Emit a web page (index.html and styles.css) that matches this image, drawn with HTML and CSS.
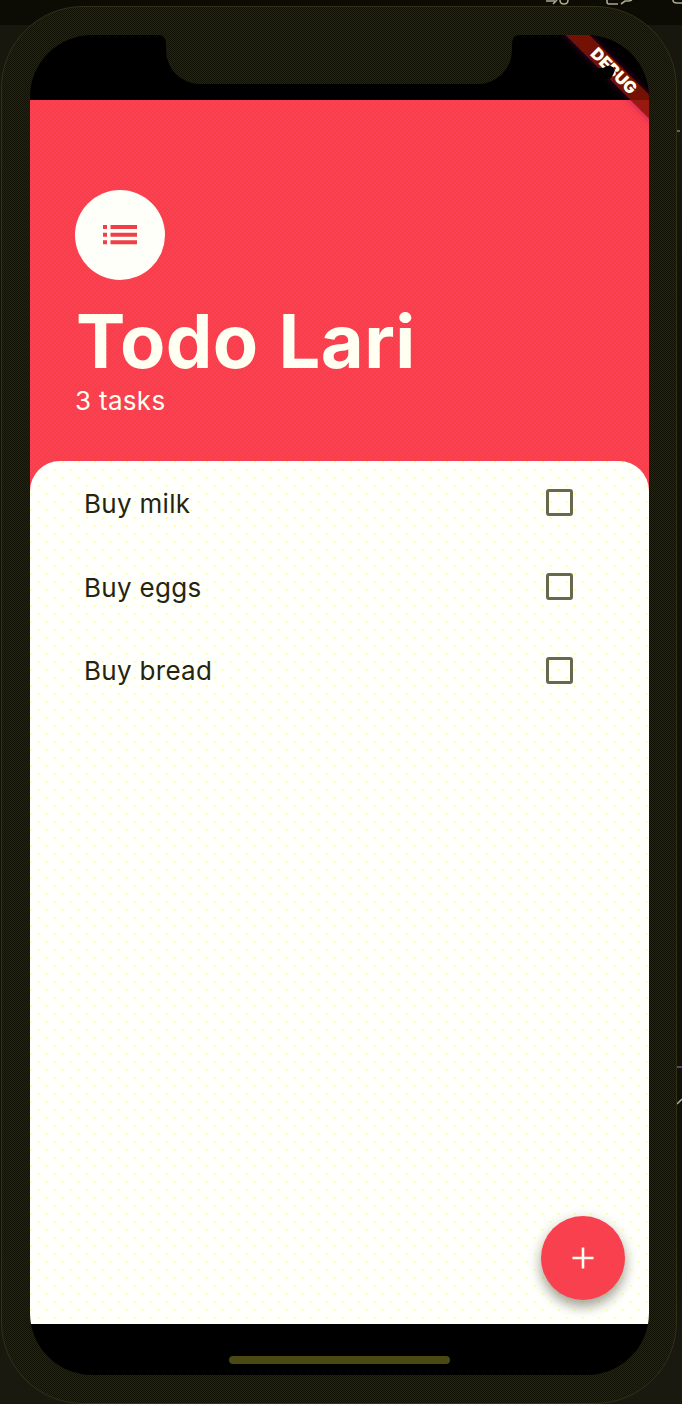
FILE: index.html
```html
<!DOCTYPE html>
<html lang="en">
<head>
<meta charset="utf-8">
<title>Todo Lari</title>
<link rel="stylesheet" href="styles.css">
</head>
<body>
<svg class="backdrop" width="682" height="1404" viewBox="0 0 682 1404" fill="none" stroke="#a9a98c" stroke-width="1.6">
  <path d="M546 1h9M553 4l4-4M560 0q0 4 4 4t4-4M607 0v2q0 2 2 2h9M621 4l4-3h4l3-1M673 0q0 3 4 3h5"/>
  <path d="M676 131h4" stroke="#77775f"/>
  <path d="M676 1067h6" stroke="#735189"/>
  <path d="M677 1104l5-5"/>
</svg>
<div class="device">
  <main class="screen">
    <div class="status-bar"></div>
    <header class="header">
      <div class="avatar">
        <svg width="34" height="20" viewBox="0 0 34 20" fill="#f03f47">
          <path d="M0 0h4v4H0zM7.5 0H34v4H7.5zM0 7.7h4v4H0zM7.5 7.7H34v4H7.5zM0 15.2h4v4H0zM7.5 15.2H34v4H7.5z"/>
        </svg>
      </div>
      <h1 class="title">Todo Lari</h1>
      <p class="count">3 tasks</p>
    </header>
    <section class="sheet">
      <ul class="tasks">
        <li class="task"><span class="task-name">Buy milk</span><span class="checkbox"></span></li>
        <li class="task"><span class="task-name">Buy eggs</span><span class="checkbox"></span></li>
        <li class="task"><span class="task-name">Buy bread</span><span class="checkbox"></span></li>
      </ul>
      <button class="fab" aria-label="Add task">
        <svg width="22" height="22" viewBox="0 0 22 22" stroke="#fffff4" stroke-width="2.6"><path d="M11 .5v21M.5 11h21"/></svg>
      </button>
    </section>
    <footer class="home-area"><div class="home-bar"></div></footer>
    <div class="ribbon"><span class="ribbon-text">DEBUG</span></div>
    <svg class="ribbon-gap" width="28" height="16" viewBox="0 0 28 16">
      <path d="M0 2h6l4-2q6-1 8 4l-2 5-3 4H0z" fill="#000"/>
    </svg>
    <svg class="notch" width="362" height="49" viewBox="0 0 362 49">
      <defs>
        <pattern id="weave" width="2" height="2" patternUnits="userSpaceOnUse">
          <path d="M0 0h2v2H0z" fill="#111104"/><path d="M0 0h1v1H0zM1 1h1v1H1z" fill="#26250c"/>
        </pattern>
      </defs>
      <path d="M0 0Q8 0 8 9V15A34 34 0 0 0 42 49H320A34 34 0 0 0 354 15V9Q354 0 362 0Z" fill="url(#weave)"/>
    </svg>
  </main>
</div>
</body>
</html>
```
FILE: styles.css
```css
* { box-sizing: border-box; }

body {
  margin: 0;
  width: 682px;
  height: 1404px;
  overflow: hidden;
  padding: 6px 0 0 1px;
  background: linear-gradient(#0c0c05 0 25px, #17170d 25px 140px, #111108 300px 1250px, #19190f 1360px);
  font-family: Inter, "Liberation Sans", sans-serif;
}

.backdrop { position: absolute; left: 0; top: 0; }

.device {
  position: relative;
  width: 676px;
  height: 1398px;
  padding: 28px 27px 28px 28px;
  border: 1px solid #303019;
  border-radius: 82px;
  background: repeating-conic-gradient(#111104 0 25%, #26250c 0 50%) 0 0 / 2px 2px;
}

.screen {
  position: relative;
  display: flex;
  flex-direction: column;
  width: 619px;
  height: 1340px;
  overflow: hidden;
  border-radius: 62px;
  background: #000;
}

.status-bar { height: 65px; flex: none; }

.header {
  height: 391px;
  flex: none;
  padding: 90.4px 45px 0;
  background: repeating-conic-gradient(#fd4056 0 25%, #f54048 0 50%) 0 0 / 4px 4px;
  color: #fffff2;
}

.avatar {
  display: flex;
  align-items: center;
  justify-content: center;
  width: 90px;
  height: 90px;
  border-radius: 50%;
  background: #fffff9;
}

.title {
  margin: 19.6px 0 0 1px;
  font-size: 74px;
  line-height: 82px;
  font-weight: 700;
  letter-spacing: 0.4px;
  word-spacing: 2px;
  white-space: nowrap;
}

.count {
  margin: 3px 0 0;
  font-size: 26px;
  line-height: 32px;
  letter-spacing: 0.3px;
}

.sheet {
  position: relative;
  height: 863px;
  flex: none;
  margin-top: -30px;
  border-radius: 30px 30px 0 0;
  background-color: #fffffb;
  background-image:
    linear-gradient(#ffffb4, #ffffb4),
    linear-gradient(#ffffb4, #ffffb4);
  background-image:
    radial-gradient(circle at 1px 1px, #ffffb4 1px, transparent 1px),
    radial-gradient(circle at 9px 9px, #ffffb4 1px, transparent 1px);
  background-size: 16px 16px;
}

.tasks { margin: 0; padding: 0 76px 0 54px; list-style: none; }

.task {
  display: flex;
  align-items: center;
  justify-content: space-between;
  height: 83.7px;
  color: #25250f;
  font-size: 26px;
  letter-spacing: 0.3px;
}

.task-name { padding-top: 1.4px; }

.checkbox {
  width: 27px;
  height: 27px;
  border: 3px solid #68684d;
  border-radius: 3px;
}

.fab {
  position: absolute;
  right: 24px;
  bottom: 24px;
  display: flex;
  align-items: center;
  justify-content: center;
  width: 84px;
  height: 84px;
  padding: 0;
  border: 0;
  border-radius: 50%;
  background: #f9404e;
  box-shadow: 0 7px 11px rgba(40, 40, 20, .35), 0 3px 16px rgba(60, 60, 20, .14);
}

.home-area { flex: 1; display: flex; justify-content: center; padding-top: 32px; }

.home-bar { width: 221px; height: 8px; border-radius: 4px; background: #4b4813; }

.ribbon {
  position: absolute;
  left: 508px;
  top: 27px;
  width: 150px;
  height: 17px;
  display: flex;
  align-items: center;
  justify-content: center;
  transform: rotate(45deg);
  background: rgba(135, 20, 6, .85);
  box-shadow: 0 0 7px rgba(130, 0, 100, .5);
}

.ribbon-text { color: #fffff0; font-size: 16.5px; line-height: 17px; font-weight: 900; padding-left: 2px; }

.ribbon-gap { position: absolute; left: 567px; top: 31px; }

.notch { position: absolute; left: 128px; top: 0; }
```
